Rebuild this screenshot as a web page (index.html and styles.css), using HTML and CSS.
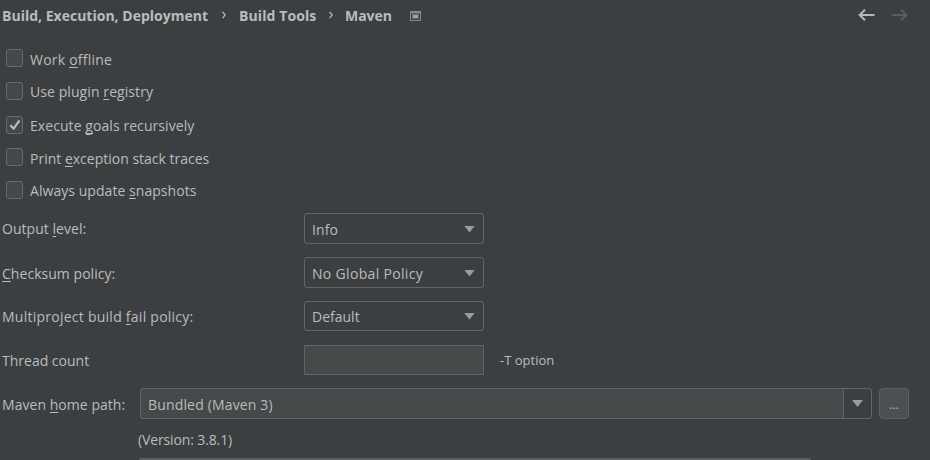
FILE: index.html
```
<!DOCTYPE html>
<html lang="en">
<head>
<meta charset="utf-8">
<title>Maven</title>
<link rel="stylesheet" href="styles.css">
</head>
<body>
<header class="header">
  <nav class="crumbs">
    <span class="crumb crumb-root">Build, Execution, Deployment</span>
    <svg class="sep" width="4" height="8" viewBox="0 0 4 8"><path d="M.6.8 3.2 4 .6 7.2"/></svg>
    <span class="crumb crumb-group">Build Tools</span>
    <svg class="sep sep-last" width="4" height="8" viewBox="0 0 4 8"><path d="M.6.8 3.2 4 .6 7.2"/></svg>
    <span class="crumb crumb-page">Maven</span>
    <svg class="scope" width="11" height="10" viewBox="0 0 11 10"><path fill="#7f8b91" fill-rule="evenodd" d="M0 0h11v10H0zM1 2.5v6.5h9V2.5z"/><path fill="#5f686d" d="M2 3h7v5H2z"/><path fill="#98a4aa" d="M3 4h5v3H3z"/></svg>
  </nav>
  <div class="history">
    <svg class="arrow" width="17" height="12" viewBox="0 0 17 12"><path d="M16.5 6H2M7 .8 1.6 6 7 11.2"/></svg>
    <svg class="arrow off" width="17" height="12" viewBox="0 0 17 12"><path d="M.5 6H15M10 .8 15.4 6 10 11.2"/></svg>
  </div>
</header>
<main>
  <div class="checks">
    <label class="check"><span class="box"></span><span class="text t-work">Work <u>o</u>ffline</span></label>
    <label class="check"><span class="box"></span><span class="text t-plugin">Use plugin <u>r</u>egistry</span></label>
    <label class="check"><span class="box checked"><svg width="12" height="12" viewBox="0 0 12 12"><path d="M1.3 6.2 4.6 9.6 10.5 1.5"/></svg></span><span class="text t-goals">Execute <u>g</u>oals recursively</span></label>
    <label class="check"><span class="box"></span><span class="text t-print">Print <u>e</u>xception stack traces</span></label>
    <label class="check"><span class="box"></span><span class="text t-always">Always update <u>s</u>napshots</span></label>
  </div>
  <div class="form">
    <div class="row"><span class="label"><span class="text t-output">Output <u>l</u>evel:</span></span><div class="select low"><span class="text t-info">Info</span><i class="caret"></i></div></div>
    <div class="row"><span class="label label-low"><span class="text t-checksum"><u>C</u>hecksum policy:</span></span><div class="select low"><span class="text t-global">No Global Policy</span><i class="caret"></i></div></div>
    <div class="row"><span class="label"><span class="text t-multi">Multiproject build <u>f</u>ail policy:</span></span><div class="select"><span class="text t-default">Default</span><i class="caret"></i></div></div>
    <div class="row"><span class="label"><span class="text t-thread">Thread count</span></span><div class="input"></div><span class="hint">-T option</span></div>
  </div>
  <div class="path">
    <span class="path-label"><span class="text t-home">Maven <u>h</u>ome path:</span></span>
    <div class="combo"><span class="text t-bundled">Bundled (Maven 3)</span><span class="drop"><i class="caret"></i></span></div>
    <div class="more">...</div>
  </div>
  <div class="version"><span class="text t-version">(Version: 3.8.1)</span></div>
  <div class="next-field"></div>
</main>
</body>
</html>
```
FILE: styles.css
```
* { box-sizing: border-box; }
body {
  margin: 0;
  width: 930px;
  height: 460px;
  overflow: hidden;
  background: #3c3f41;
  color: #bbbbbb;
  font: 14px/20px "Open Sans", "Noto Sans", sans-serif;
}
svg { display: block; flex: none; fill: none; }
.text, .crumb { white-space: nowrap; }
u { text-decoration-thickness: 1px; text-underline-offset: 2px; text-decoration-skip-ink: none; }

.header { display: flex; justify-content: space-between; height: 32px; padding: 6px 22px 0 2px; }
.crumbs { display: flex; height: 20px; align-items: center; font-weight: 700; }
.crumb-root { width: 206px; letter-spacing: .01px; }
.crumb-group { width: 77px; letter-spacing: .1px; }
.crumb-page { width: 47px; letter-spacing: -.05px; }
.sep { margin: 0 13px 3px 14px; stroke: #bbbbbb; stroke-width: 1.2; }
.sep-last { margin: 0 12px 3px 13px; }
.scope { margin-left: 18px; }
.history { display: flex; gap: 16px; padding-top: 3px; }
.arrow { stroke: #b4b6b7; stroke-width: 2; }
.off { stroke: #5b5d5e; }

.checks { display: grid; grid-template-rows: 33px 33px 33px 33px 32px; padding: 17px 0 0 6px; height: 181px; }
.check { display: flex; align-items: flex-start; gap: 7px; }
.check .text { margin-top: 1px; }
.check:nth-child(2) .text, .check:nth-child(5) .text { margin-top: 0; }
.box { display: grid; place-items: center; width: 17px; height: 18px; border: 1px solid #6b6b6b; border-radius: 3px; background: #43494a; }
.checked { margin-top: 1px; }
.box svg { stroke: #bbbbbb; stroke-width: 2.2; }

.t-work { letter-spacing: .22px; }
.t-plugin { letter-spacing: .08px; }
.t-goals { letter-spacing: .07px; }
.t-always { letter-spacing: .05px; }
.t-output, .t-checksum, .t-home { letter-spacing: .04px; }
.t-global { letter-spacing: .32px; }
.t-multi { letter-spacing: .25px; }
.t-info { letter-spacing: .1px; }
.t-bundled { letter-spacing: .16px; }
.t-version { letter-spacing: -.13px; }

.form { display: grid; grid-template-rows: repeat(4, 44px); height: 175px; }
.row { display: flex; align-items: flex-start; }
.label { width: 302px; margin-left: 2px; padding-top: 6px; }
.label-low { padding-top: 7px; }
.select, .input { width: 180px; height: 30px; border: 1px solid #646464; }
.select { display: flex; align-items: center; justify-content: space-between; padding: 2px 8px 0 7px; border-radius: 3px; }
.low { height: 31px; padding-top: 3px; }
.input { background: #45494a; }
.caret { width: 11px; height: 7px; margin-bottom: 2px; background: #9a9da0; clip-path: polygon(0 0, 100% 0, 50% 100%); }
.hint { margin: 5px 0 0 16px; font-size: 13px; }

.path { display: flex; align-items: flex-start; height: 42px; padding-left: 2px; }
.path-label { width: 138px; padding-top: 7px; }
.combo { display: flex; justify-content: space-between; align-items: center; width: 732px; height: 31px; border: 1px solid #646464; border-radius: 3px; background: #45494a; padding-left: 7px; }
.combo .text { padding-top: 2px; }
.drop { display: grid; place-items: center; width: 28px; height: 29px; border-left: 1px solid #646464; background: #3c3f41; border-radius: 0 3px 3px 0; }
.drop .caret { margin-bottom: 0; }
.more { width: 30px; height: 31px; margin-left: 7px; border: 1px solid #5e6060; border-radius: 4px; background: #4c5052; text-align: center; font-size: 12px; line-height: 32px; }
.version { height: 28px; padding-left: 138px; }
.next-field { width: 672px; height: 2px; margin-left: 139px; background: #5e5e5e; border-radius: 2px 2px 0 0; }
```
